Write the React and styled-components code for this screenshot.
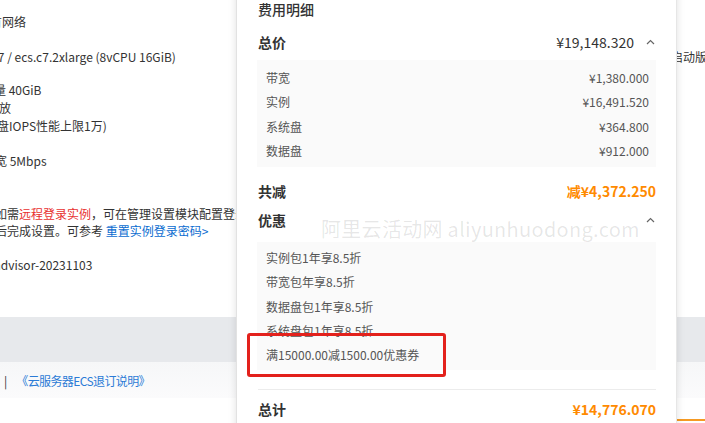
import React from 'react';
import styled, { createGlobalStyle } from 'styled-components';

const GlobalStyle = createGlobalStyle`
  html, body {
    margin: 0;
    padding: 0;
    background: #fff;
  }
  body {
    font-family: "Noto Sans CJK SC", "Noto Sans", sans-serif;
    color: #333;
    overflow: hidden;
  }
`;

const Page = styled.div`
  position: relative;
  width: 705px;
  height: 423px;
  overflow: hidden;
  background: #fff;
`;

const Content = styled.div`
  height: 317px;
  padding-top: 13px;
  box-sizing: border-box;
  font-size: 12px;
  color: #333;
`;

const Line = styled.div`
  display: flex;
  justify-content: space-between;
  height: 18px;
  line-height: 18px;
  margin-top: ${p => p.$top || 0}px;
  margin-left: ${p => p.$shift || 0}px;
  white-space: nowrap;
`;

const Warn = styled.span`
  color: #e8312f;
`;

const Link = styled.span`
  color: #0a6cd0;
`;

const Aside = styled.span`
  margin-right: -2px;
`;

const GreyBand = styled.div`
  height: 45px;
  background: #e7e9ec;
`;

const FooterBar = styled.div`
  height: 36px;
  display: flex;
  align-items: center;
  gap: 9px;
  padding-left: 4px;
  background: linear-gradient(#f6f7f8, #fbfbfc);
  font-size: 12px;
  color: #333;
`;

const FooterLink = styled.span`
  color: #2b7bd6;
  letter-spacing: -0.6px;
`;

const BottomArea = styled.div`
  height: 23px;
  display: flex;
  justify-content: flex-end;
  align-items: flex-end;
`;

const OrangeTab = styled.div`
  width: 120px;
  height: 2px;
  background: #f59a23;
`;

const Popover = styled.div`
  position: absolute;
  top: -12px;
  left: 236px;
  width: 441px;
  height: 460px;
  box-sizing: border-box;
  padding: 11px 20px 0 21px;
  background: #fff;
  border-left: 1px solid #e2e2e2;
  border-right: 1px solid #e6e6e6;
  box-shadow: 0 0 8px rgba(0, 0, 0, 0.12);
`;

const PopTitle = styled.div`
  font-size: 14px;
  line-height: 20px;
  font-weight: 500;
  color: #333;
`;

const SumRow = styled.div`
  display: flex;
  align-items: center;
  justify-content: space-between;
  height: ${p => p.$h || 28}px;
  margin-top: ${p => p.$top || 0}px;
`;

const SumLabel = styled.span`
  font-size: 14px;
  font-weight: 700;
  color: #333;
`;

const SumValue = styled.span`
  display: flex;
  align-items: center;
  font-size: 14px;
  font-weight: ${p => (p.$accent ? 700 : 400)};
  color: ${p => (p.$accent ? '#ff8a00' : '#333')};
`;

const ChevronIcon = styled.svg`
  width: 9px;
  height: 6px;
  margin-left: 12px;
  margin-right: 1px;
`;

const Chevron = () => (
  <ChevronIcon viewBox="0 0 9 6">
    <polyline points="1,5 4.5,1.5 8,5" fill="none" stroke="#666" strokeWidth="1.2" />
  </ChevronIcon>
);

const DetailBox = styled.div`
  margin: ${p => p.$top}px 0 0 -1px;
  padding: ${p => p.$pad};
  background: #fafafa;
  font-size: 12px;
  color: #555;
`;

const DetailRow = styled.div`
  display: flex;
  justify-content: space-between;
  height: 24.3px;
  line-height: 24.3px;
`;

const Divider = styled.div`
  height: 1px;
  margin-top: 19px;
  background: #ececec;
`;

const Watermark = styled.div`
  position: absolute;
  top: 229px;
  left: 84px;
  font-size: 20px;
  line-height: 24px;
  letter-spacing: 0.3px;
  color: rgba(0, 0, 0, 0.1);
  white-space: nowrap;
  pointer-events: none;
`;

const Highlight = styled.div`
  position: absolute;
  top: 345px;
  left: 10px;
  width: 193px;
  height: 38px;
  border: 3px solid #e3211c;
  border-radius: 3px;
`;

const priceItems = [
  ['带宽', '¥1,380.000'],
  ['实例', '¥16,491.520'],
  ['系统盘', '¥364.800'],
  ['数据盘', '¥912.000'],
];

const discounts = [
  '实例包1年享8.5折',
  '带宽包年享8.5折',
  '数据盘包1年享8.5折',
  '系统盘包1年享8.5折',
  '满15000.00减1500.00优惠券',
];

export default function App() {
  return (
    <>
      <GlobalStyle />
      <Page>
        <Content>
          <Line $shift={-22}>专有网络</Line>
          <Line $top={17} $shift={-47}>
            <span>计算型 c7 / ecs.c7.2xlarge (8vCPU 16GiB)</span>
            <Aside>极速启动版</Aside>
          </Line>
          <Line $top={15} $shift={-18}>容量 40GiB</Line>
          <Line $shift={-49}>随实例释放</Line>
          <Line $shift={-19}>(单盘IOPS性能上限1万)</Line>
          <Line $top={17} $shift={-17}>带宽 5Mbps</Line>
          <Line $top={35} $shift={-17}>
            <span>
              您如需<Warn>远程登录实例</Warn>，可在管理设置模块配置登录凭证或创建后设置。
            </span>
          </Line>
          <Line $top={-1} $shift={-29}>
            <span>
              创建后完成设置。可参考 <Link>重置实例登录密码&gt;</Link>
            </span>
          </Line>
          <Line $top={16} $shift={-6}>advisor-20231103</Line>
        </Content>
        <GreyBand />
        <FooterBar>
          <span>|</span>
          <FooterLink>《云服务器ECS退订说明》</FooterLink>
        </FooterBar>
        <BottomArea>
          <OrangeTab />
        </BottomArea>

        <Popover>
          <PopTitle>费用明细</PopTitle>
          <SumRow $h={30} $top={8}>
            <SumLabel>总价</SumLabel>
            <SumValue>
              ¥19,148.320
              <Chevron />
            </SumValue>
          </SumRow>
          <DetailBox $top={3} $pad="6px 7px 4px 9px">
            {priceItems.map(([name, value]) => (
              <DetailRow key={name}>
                <span>{name}</span>
                <span>{value}</span>
              </DetailRow>
            ))}
          </DetailBox>
          <SumRow $top={10}>
            <SumLabel>共减</SumLabel>
            <SumValue $accent>减¥4,372.250</SumValue>
          </SumRow>
          <SumRow $top={1}>
            <SumLabel>优惠</SumLabel>
            <SumValue>
              <Chevron />
            </SumValue>
          </SumRow>
          <DetailBox $top={8} $pad="4px 7px 2px 9px">
            {discounts.map(item => (
              <DetailRow key={item}>
                <span>{item}</span>
              </DetailRow>
            ))}
          </DetailBox>
          <Divider />
          <SumRow $top={5}>
            <SumLabel>总计</SumLabel>
            <SumValue $accent>¥14,776.070</SumValue>
          </SumRow>
          <Watermark>阿里云活动网 aliyunhuodong.com</Watermark>
          <Highlight />
        </Popover>
      </Page>
    </>
  );
}
